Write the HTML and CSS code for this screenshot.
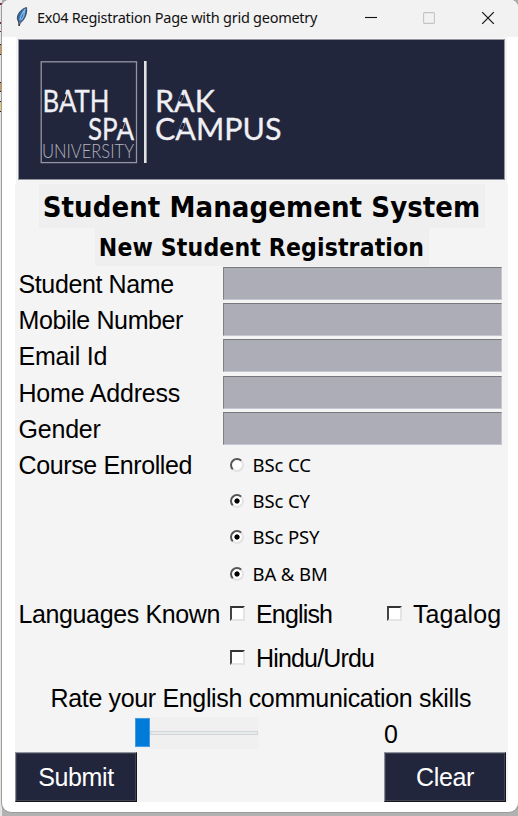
FILE: index.html
```html
<!DOCTYPE html>
<html lang="en">
<head>
<meta charset="utf-8">
<title>Ex04 Registration Page with grid geometry</title>
<link rel="stylesheet" href="styles.css">
</head>
<body>
<svg class="backdrop" width="2" height="816" viewBox="0 0 2 816">
  <path fill="#e5e5e5" d="M0 0h2v816H0z"/>
  <path fill="#7c2831" d="M0 3h2v2H0zM0 22h2v2H0zM0 31h2v1H0z"/>
  <path fill="#222" d="M0 44h2v11H0zM0 82h2v10H0zM0 101h2v11H0z"/>
  <path fill="#dc954f" d="M0 45h2v9H0zM0 83h2v8H0z"/>
  <path fill="#e8c778" d="M0 102h2v9H0z"/>
</svg>
<main class="window">
  <header class="titlebar">
    <svg class="feather" width="12" height="20" viewBox="0 0 12 20">
      <path d="M10.500.5C5 2 1 7 1.300 12L3 16l.2 3 1-3C8.500 13 11.500 7 10.500.5Z" fill="#336da9" stroke="#26374b" stroke-width=".8"/>
      <path d="M9.500 2C5.500 6 4 10 3.200 17M8.500 4c0 4-1.500 7-3 9" fill="none" stroke="#8fbce6" stroke-width="1.200"/>
      <path d="M3 13v6" stroke="#333" stroke-width="1"/>
    </svg>
    <span class="caption">Ex04 Registration Page with grid geometry</span>
    <svg class="controls" width="132" height="14" viewBox="0 0 132 14">
      <path d="M0 6.500h12" stroke="#111" stroke-width="1.100"/>
      <rect x="58.600" y="1.600" width="10.800" height="10.800" rx="1" fill="none" stroke="#c4c4c4" stroke-width="1.100"/>
      <path d="M117.200 1.200l11.600 11.600M128.800 1.200L117.200 12.800" stroke="#111" stroke-width="1.200"/>
    </svg>
  </header>
  <div class="banner">
    <svg width="487" height="141" viewBox="18 39 487 141">
      <rect x="41.200" y="61.800" width="95.300" height="100.800" fill="none" stroke="#9495a2" stroke-width="1.300"/>
      <path d="M145.300 61v102" stroke="#e1e1e6" stroke-width="2.600"/>
      <g class="logo">
        <text x="42.500" y="112" textLength="67" lengthAdjust="spacingAndGlyphs">BATH</text>
        <text x="88" y="140" textLength="46" lengthAdjust="spacingAndGlyphs">SPA</text>
        <text x="155" y="112" textLength="60" lengthAdjust="spacingAndGlyphs">RAK</text>
        <text x="155" y="140" textLength="126.500" lengthAdjust="spacingAndGlyphs">CAMPUS</text>
      </g>
      <text class="logo-small" x="42" y="158" textLength="92" lengthAdjust="spacingAndGlyphs">UNIVERSITY</text>
      <path class="cuts" d="M65 94l-2.400 7M123.300 122l-2.400 7M182.300 95l-2.600 6.500M183.500 123l-2.600 6.500"/>
    </svg>
  </div>
  <form class="form">
    <h1><span>Student Management System</span></h1>
    <h2><span>New Student Registration</span></h2>
    <div class="row"><span class="label">Student Name</span><span class="field"></span></div>
    <div class="row"><span class="label">Mobile Number</span><span class="field"></span></div>
    <div class="row"><span class="label loose">Email Id</span><span class="field"></span></div>
    <div class="row"><span class="label loose">Home Address</span><span class="field"></span></div>
    <div class="row"><span class="label loose">Gender</span><span class="field"></span></div>
    <div class="row"><span class="label">Course Enrolled</span><span class="option"><i class="radio"></i>BSc CC</span></div>
    <div class="row"><span></span><span class="option"><i class="radio on"></i>BSc CY</span></div>
    <div class="row"><span></span><span class="option"><i class="radio on"></i>BSc PSY</span></div>
    <div class="row"><span></span><span class="option"><i class="radio on"></i>BA &amp; BM</span></div>
    <div class="row checks"><span class="label">Languages Known</span><span class="check tight"><i class="box"></i>English</span><span class="check wide"><i class="box"></i>Tagalog</span></div>
    <div class="row checks"><span></span><span class="check tight"><i class="box"></i>Hindu/Urdu</span></div>
    <div class="question">Rate your English communication skills</div>
    <div class="rating"><span class="slider"><i class="thumb"></i><i class="track"></i></span><span class="value">0</span></div>
    <div class="buttons"><button type="button">Submit</button><button type="button">Clear</button></div>
  </form>
</main>
</body>
</html>
```
FILE: styles.css
```css
* { box-sizing: border-box; }
body {
  margin: 0;
  width: 518px;
  height: 816px;
  display: flex;
  overflow: hidden;
  background: #b2b2b2;
  font-family: "Liberation Sans", sans-serif;
  color: #000;
}
.backdrop { flex: none; }
.window {
  width: 516px;
  height: 812px;
  background: #fff;
  border-radius: 7px 7px 9px 9px;
  box-shadow: 0 0 0 1px #9b9b9b;
}
.titlebar {
  height: 37px;
  padding: 0 21px 0 14px;
  display: flex;
  align-items: center;
  background: #f2f2f2;
  border-radius: 7px 7px 0 0;
}
.feather { margin: 0 9px 3px 0; }
.caption {
  font: 14.500px/34px "Noto Sans", sans-serif;
  margin-bottom: 3px;
  letter-spacing: -.26px;
  white-space: nowrap;
  color: #111;
}
.controls { margin: 0 0 2px auto; }
.banner {
  width: 491px;
  height: 147px;
  margin-left: 14px;
  padding: 2px;
  background: #f4f4f4;
}
.banner svg {
  display: block;
  background: #22263c;
  outline: 1px solid #9294a0;
  outline-offset: -1px;
}
.logo { font: 31px Lato, sans-serif; fill: #f0f0f4; stroke: #f0f0f4; stroke-width: .3px; }
.logo-small { font: 300 19px Lato, sans-serif; fill: #b2b3bc; }
.cuts { fill: none; stroke: #22263c; stroke-width: 3px; }
.form {
  width: 493px;
  height: 618px;
  margin-left: 13px;
  background: #f4f4f4;
  font-size: 25px;
  letter-spacing: -.38px;
  white-space: nowrap;
}
h1, h2 {
  margin: 0;
  display: flex;
  justify-content: center;
  font-family: "DejaVu Sans Condensed", "DejaVu Sans", sans-serif;
  font-stretch: condensed;
  font-weight: bold;
}
h1 { height: 44px; font-size: 29px; line-height: 46px; letter-spacing: .06px; }
h2 { height: 38px; font-size: 24.500px; line-height: 39px; letter-spacing: .15px; }
h1 span, h2 span { background: #efefef; text-align: center; }
h1 span { width: 446px; }
h2 span { width: 334px; }
.row {
  display: grid;
  grid-template-columns: 204.500px 157px 1fr;
  padding-left: 3.500px;
  height: 36.200px;
  line-height: 37px;
}
.loose { letter-spacing: -.2px; }
.field {
  grid-column: 2 / 4;
  width: 279px;
  height: 33px;
  margin-top: 1px;
  background: #adadb7;
  border: 1px solid #c6c6d2;
  border-top: 1.500px solid #77777d;
  border-left: 1.500px solid #808087;
}
.option, .check { display: flex; align-items: center; }
.option {
  padding-left: 7px;
  font: 18.500px/36px "Noto Sans", sans-serif;
  letter-spacing: -.1px;
}
.radio {
  width: 14px;
  height: 14px;
  margin-right: 8.500px;
  border: 2px solid;
  border-color: #555 #e3e3e3 #e3e3e3 #555;
  border-radius: 50%;
  background: #fff;
}
.radio.on { background: radial-gradient(circle, #000 2.200px, #fff 3px); }
.checks { height: 44px; line-height: 44px; }
.check { padding-left: 7px; }
.tight { letter-spacing: -.83px; }
.wide { letter-spacing: .1px; }
.box {
  width: 15px;
  height: 15px;
  margin: 0 11px 0 0;
  border: 2px solid;
  border-color: #333 #e4e4e4 #e4e4e4 #444;
  background: #fff;
}
.question { height: 37px; line-height: 37px; padding-left: 35.500px; letter-spacing: -.34px; }
.rating { height: 35px; display: flex; padding-left: 120px; }
.slider { width: 124px; height: 32px; display: flex; align-items: center; background: #f0f0f0; }
.thumb { width: 15px; height: 29px; background: #007bda; border: 1px solid #429ce2; }
.track { width: 108px; height: 4px; background: #e7eaea; border: 1px solid #d4d7d8; }
.value { margin-left: 125px; line-height: 35px; }
.buttons { display: flex; justify-content: space-between; padding-right: 2px; }
button {
  width: 122px;
  height: 50px;
  padding: 2px 0 0;
  font: 25px "Liberation Sans", sans-serif;
  letter-spacing: -.36px;
  color: #fff;
  background: #22263c;
  border: 1px solid #141520;
  border-top-color: #9294a0;
  border-left-color: #8a8c98;
  box-shadow: inset -1px -1px #41444f, inset 1px 1px #3a3e51;
}
```
